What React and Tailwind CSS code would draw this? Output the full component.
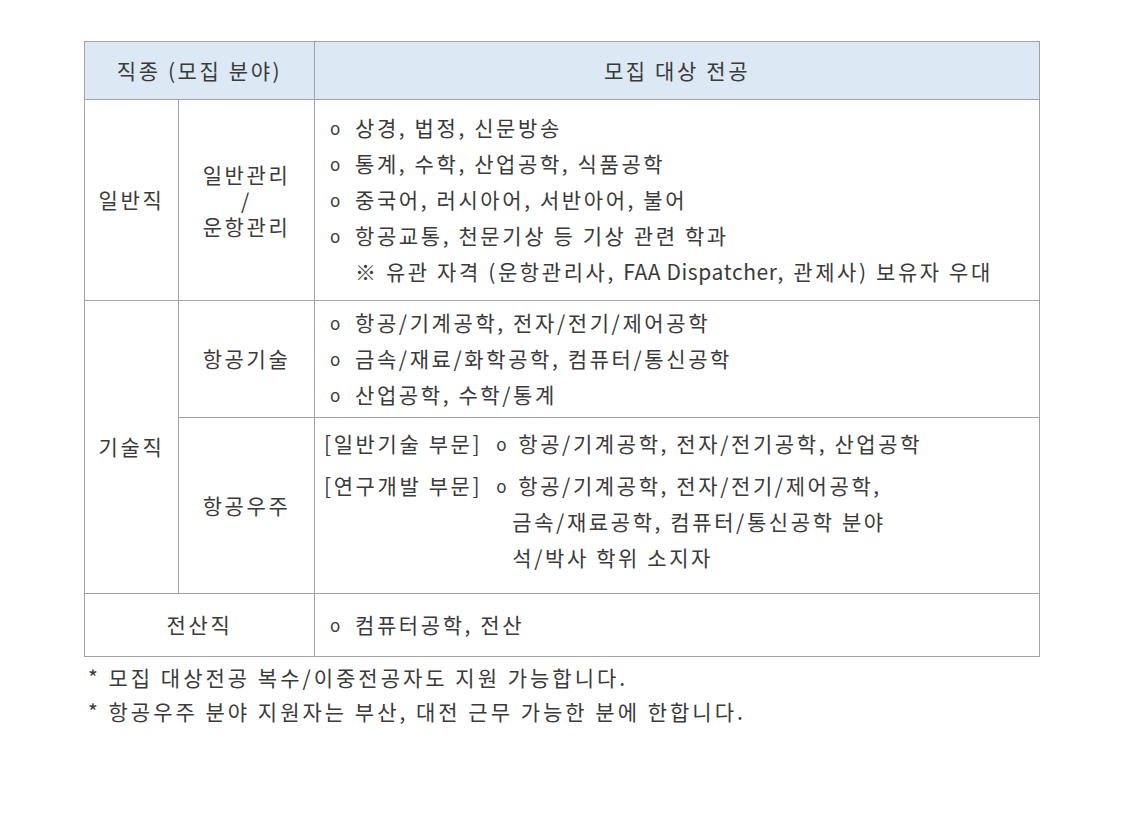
import React from "react";

const font = { fontFamily: '"Noto Sans CJK KR", "Noto Sans", sans-serif' };

const Bullet = ({ children }) => (
  <div className="h-[36px] flex items-center whitespace-nowrap">
    <span className="w-[25px] shrink-0 text-[17px] tracking-normal">o</span>
    <span>{children}</span>
  </div>
);

export default function App() {
  const cell = "border border-[#a3a3a3]";
  return (
    <div className="w-[1125px] h-[832px] bg-white text-[#3a3a3a] text-[21px] tracking-[2.6px] pt-[41px] pl-[84px]" style={font}>
      <table className="border-collapse w-[956px]">
        <colgroup>
          <col className="w-[94px]" />
          <col className="w-[136px]" />
          <col />
        </colgroup>
        <tbody>
          {/* Header */}
          <tr className="h-[58px] bg-[#dce8f4]">
            <td colSpan={2} className={`${cell} text-center`}>직종 (모집 분야)</td>
            <td className={`${cell} text-center`}>모집 대상 전공</td>
          </tr>

          {/* 일반직 */}
          <tr className="h-[201px]">
            <td className={`${cell} text-center`}>일반직</td>
            <td className={`${cell} text-center leading-[26px]`}>
              일반관리
              <br />/
              <br />운항관리
            </td>
            <td className={`${cell} pl-[15px] pr-[10px] py-[8px]`}>
              <Bullet>상경, 법정, 신문방송</Bullet>
              <Bullet>통계, 수학, 산업공학, 식품공학</Bullet>
              <Bullet>중국어, 러시아어, 서반아어, 불어</Bullet>
              <Bullet>항공교통, 천문기상 등 기상 관련 학과</Bullet>
              <div className="h-[36px] flex items-center pl-[25px] whitespace-nowrap">
                <span>
                  ※ 유관 자격 (운항관리사, <span className="tracking-[0.6px]">FAA Dispatcher</span>, 관제사) 보유자 우대
                </span>
              </div>
            </td>
          </tr>

          {/* 기술직 - 항공기술 */}
          <tr className="h-[117px]">
            <td rowSpan={2} className={`${cell} text-center`}>기술직</td>
            <td className={`${cell} text-center`}>항공기술</td>
            <td className={`${cell} pl-[15px] pr-[10px] py-[4px]`}>
              <Bullet>항공/기계공학, 전자/전기/제어공학</Bullet>
              <Bullet>금속/재료/화학공학, 컴퓨터/통신공학</Bullet>
              <Bullet>산업공학, 수학/통계</Bullet>
            </td>
          </tr>

          {/* 기술직 - 항공우주 */}
          <tr className="h-[176px]">
            <td className={`${cell} text-center`}>항공우주</td>
            <td className={`${cell} pl-[9px] pr-[10px] align-top pt-[8px]`}>
              <div className="h-[36px] flex items-center whitespace-nowrap">
                <span className="mr-[14px]">[일반기술 부문]</span>
                <span className="w-[22px] text-[17px] tracking-normal">o</span>
                <span>항공/기계공학, 전자/전기공학, 산업공학</span>
              </div>
              <div className="flex mt-[6px] whitespace-nowrap">
                <span className="mr-[14px] h-[36px] flex items-center">[연구개발 부문]</span>
                <span className="w-[16px] h-[36px] flex items-center text-[17px] tracking-normal">o</span>
                <div>
                  <div className="h-[36px] flex items-center pl-[6px]">항공/기계공학, 전자/전기/제어공학,</div>
                  <div className="h-[36px] flex items-center">금속/재료공학, 컴퓨터/통신공학 분야</div>
                  <div className="h-[36px] flex items-center">석/박사 학위 소지자</div>
                </div>
              </div>
            </td>
          </tr>

          {/* 전산직 */}
          <tr className="h-[63px]">
            <td colSpan={2} className={`${cell} text-center`}>전산직</td>
            <td className={`${cell} pl-[15px] pr-[10px]`}>
              <Bullet>컴퓨터공학, 전산</Bullet>
            </td>
          </tr>
        </tbody>
      </table>

      {/* Footnotes */}
      <div className="pl-[4px] pt-[4px] tracking-[3px]">
        <div className="h-[34px] flex items-center">* 모집 대상전공 복수/이중전공자도 지원 가능합니다.</div>
        <div className="h-[34px] flex items-center">* 항공우주 분야 지원자는 부산, 대전 근무 가능한 분에 한합니다.</div>
      </div>
    </div>
  );
}
